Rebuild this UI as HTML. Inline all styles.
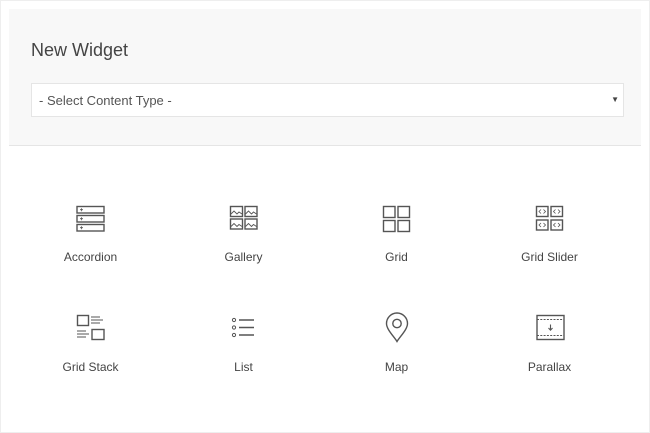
<!DOCTYPE html>
<html><head><style>
html,body{margin:0;padding:0;background:#fff;}
body{width:650px;height:433px;position:relative;font-family:"Liberation Sans",sans-serif;overflow:hidden;}
.frame{position:absolute;left:0;top:0;width:648px;height:431px;border:1px solid #eee;}
.head{position:absolute;left:9px;top:9px;width:632px;height:136px;background:#f8f8f8;border-bottom:1px solid #e5e5e5;}
.title{position:absolute;left:22px;top:31px;font-size:18px;color:#444;}
.sel{position:absolute;left:22px;top:74px;width:591px;height:32px;background:#fff;border:1px solid #e5e5e5;font-size:13px;color:#555;}
.sel span{position:absolute;left:7px;top:9px;}
.sel i{position:absolute;right:4px;top:11px;font-style:normal;font-size:8px;color:#444;}
.it{position:absolute;width:153px;text-align:center;font-size:12px;color:#444;}
.it svg{display:block;margin:0 auto;}
.it div{margin-top:var(--g);}
</style></head><body>
<div class="frame"></div>
<div class="head">
<div class="title">New Widget</div>
<div class="sel"><span>- Select Content Type -</span><i>▼</i></div>
</div>
<svg width="650" height="433" style="position:absolute;left:0;top:0" fill="none" stroke="#555" stroke-width="1.4">
<!-- accordion -->
<rect x="77" y="206.5" width="27" height="6.5"/><rect x="77" y="215.5" width="27" height="6.5"/><rect x="77" y="224.5" width="27" height="6.5"/>
<path d="M80 209.7h3M81.5 208.2v3M80 218.7h3M81.5 217.2v3M80 227.7h3M81.5 226.2v3" stroke-width="0.8"/>
<!-- gallery -->
<rect x="230.5" y="206.5" width="12" height="10"/><rect x="245" y="206.5" width="12" height="10"/><rect x="230.5" y="219" width="12" height="10"/><rect x="245" y="219" width="12" height="10"/>
<path d="M231 214l3-3 3 3 2-2 3 2M245.5 214l3-3 3 3 2-2 3 2M231 226.5l3-3 3 3 2-2 3 2M245.5 226.5l3-3 3 3 2-2 3 2" stroke-width="0.9"/>
<!-- grid -->
<rect x="383.5" y="206.5" width="11.5" height="11"/><rect x="398" y="206.5" width="11.5" height="11"/><rect x="383.5" y="220.5" width="11.5" height="11"/><rect x="398" y="220.5" width="11.5" height="11"/>
<!-- grid slider -->
<rect x="536.5" y="206.5" width="11.5" height="10"/><rect x="551" y="206.5" width="11.5" height="10"/><rect x="536.5" y="220" width="11.5" height="10"/><rect x="551" y="220" width="11.5" height="10"/>
<path d="M541 209.5l-2 2 2 2M543.5 209.5l2 2-2 2M555.5 209.5l-2 2 2 2M558 209.5l2 2-2 2M541 223l-2 2 2 2M543.5 223l2 2-2 2M555.5 223l-2 2 2 2M558 223l2 2-2 2" stroke-width="0.8"/>
<!-- grid stack -->
<rect x="77.5" y="315.5" width="11" height="10"/><rect x="92" y="329.5" width="12" height="10"/>
<path d="M91 317h9M91 320h12M91 323h9M77 331h9M77 334h12M77 337h9" stroke-width="1"/>
<!-- list -->
<circle cx="234" cy="320" r="1.6" stroke-width="1"/><circle cx="234" cy="327.5" r="1.6" stroke-width="1"/><circle cx="234" cy="335" r="1.6" stroke-width="1"/>
<path d="M239 320h15M239 327.5h15M239 335h15"/>
<!-- map -->
<path d="M397 341.5c-3-5-10.5-12-10.5-18a10.5 10.5 0 0 1 21 0c0 6-7.5 13-10.5 18z"/>
<circle cx="397" cy="323.5" r="4.2"/>
<!-- parallax -->
<rect x="537" y="315.5" width="27" height="24"/>
<path d="M537 319.5h27M537 335.5h27" stroke-dasharray="2 1.3" stroke-width="1"/>
<path d="M550.5 324.5v5.5M548.5 328l2 2.2 2-2.2" stroke-width="1.1"/>
</svg>
<div class="it" style="left:14px;top:250px">Accordion</div>
<div class="it" style="left:167px;top:250px">Gallery</div>
<div class="it" style="left:320px;top:250px">Grid</div>
<div class="it" style="left:473px;top:250px">Grid Slider</div>
<div class="it" style="left:14px;top:360px">Grid Stack</div>
<div class="it" style="left:167px;top:360px">List</div>
<div class="it" style="left:320px;top:360px">Map</div>
<div class="it" style="left:473px;top:360px">Parallax</div>
</body></html>
